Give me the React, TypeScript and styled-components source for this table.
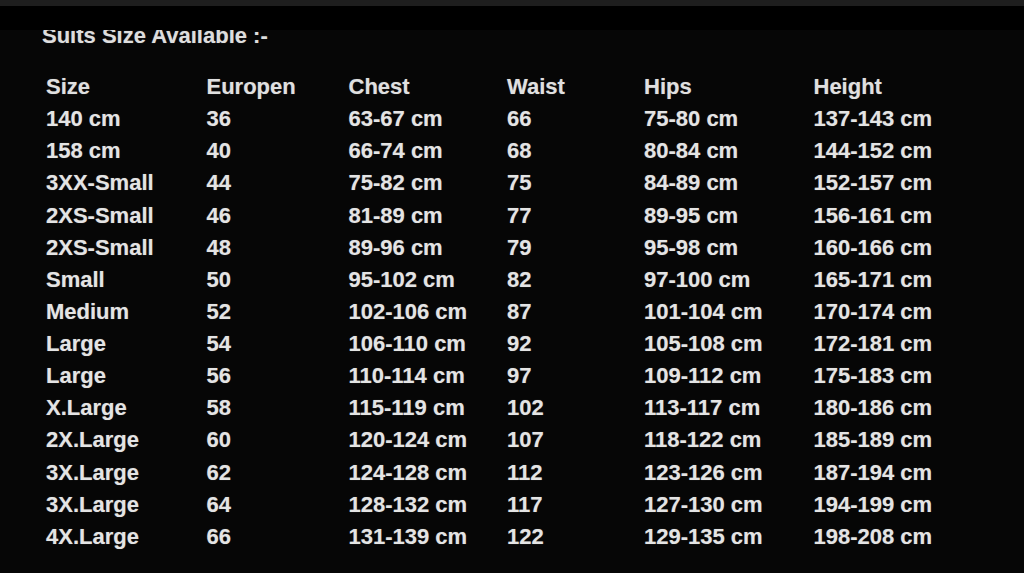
import styled, { createGlobalStyle } from "styled-components";

const GlobalStyle = createGlobalStyle`
  html, body {
    margin: 0;
    padding: 0;
    background: #060606;
  }
  body {
    font-family: "Liberation Sans", Arial, sans-serif;
  }
`;

const Page = styled.div`
  width: 1024px;
  height: 573px;
  display: flex;
  flex-direction: column;
  overflow: hidden;
  background: #060606;
`;

const TopBar = styled.div`
  height: 6px;
  background: #1e1e1e;
  flex-shrink: 0;
`;

const Mask = styled.div`
  height: 24px;
  background: #000;
  flex-shrink: 0;
`;

const Content = styled.div`
  flex: 1;
  overflow: hidden;
  padding-left: 42px;
`;

const Title = styled.h2`
  margin: -5px 0 0 0;
  font-size: 22px;
  line-height: 22px;
  font-weight: bold;
  color: #dedede;
  text-shadow: 0 0 1px rgba(255, 255, 255, 0.35);
`;

const Table = styled.div`
  margin-top: 24px;
  padding-left: 4px;
  display: grid;
  grid-template-columns: 160.5px 142px 158.5px 137px 169.5px 1fr;
`;

const Cell = styled.div<{ $head?: boolean }>`
  font-size: 22px;
  line-height: 32.14px;
  height: 32.14px;
  font-weight: bold;
  white-space: nowrap;
  color: ${(p) => (p.$head ? "#e0e0e0" : "#e4e4e4")};
  text-shadow: 0 0 1px rgba(255, 255, 255, 0.35);
`;

const head = ["Size", "Europen", "Chest", "Waist", "Hips", "Height"];

const rows = [
  ["140 cm", "36", "63-67 cm", "66", "75-80 cm", "137-143 cm"],
  ["158 cm", "40", "66-74 cm", "68", "80-84 cm", "144-152 cm"],
  ["3XX-Small", "44", "75-82 cm", "75", "84-89 cm", "152-157 cm"],
  ["2XS-Small", "46", "81-89 cm", "77", "89-95 cm", "156-161 cm"],
  ["2XS-Small", "48", "89-96 cm", "79", "95-98 cm", "160-166 cm"],
  ["Small", "50", "95-102 cm", "82", "97-100 cm", "165-171 cm"],
  ["Medium", "52", "102-106 cm", "87", "101-104 cm", "170-174 cm"],
  ["Large", "54", "106-110 cm", "92", "105-108 cm", "172-181 cm"],
  ["Large", "56", "110-114 cm", "97", "109-112 cm", "175-183 cm"],
  ["X.Large", "58", "115-119 cm", "102", "113-117 cm", "180-186 cm"],
  ["2X.Large", "60", "120-124 cm", "107", "118-122 cm", "185-189 cm"],
  ["3X.Large", "62", "124-128 cm", "112", "123-126 cm", "187-194 cm"],
  ["3X.Large", "64", "128-132 cm", "117", "127-130 cm", "194-199 cm"],
  ["4X.Large", "66", "131-139 cm", "122", "129-135 cm", "198-208 cm"],
];

export default function App() {
  return (
    <>
      <GlobalStyle />
      <Page>
        <TopBar />
        <Mask />
        <Content>
          <Title>Suits Size Available :-</Title>
          <Table>
            {head.map((h) => (
              <Cell key={h} $head>
                {h}
              </Cell>
            ))}
            {rows.map((r, i) =>
              r.map((c, j) => <Cell key={`${i}-${j}`}>{c}</Cell>)
            )}
          </Table>
        </Content>
      </Page>
    </>
  );
}
